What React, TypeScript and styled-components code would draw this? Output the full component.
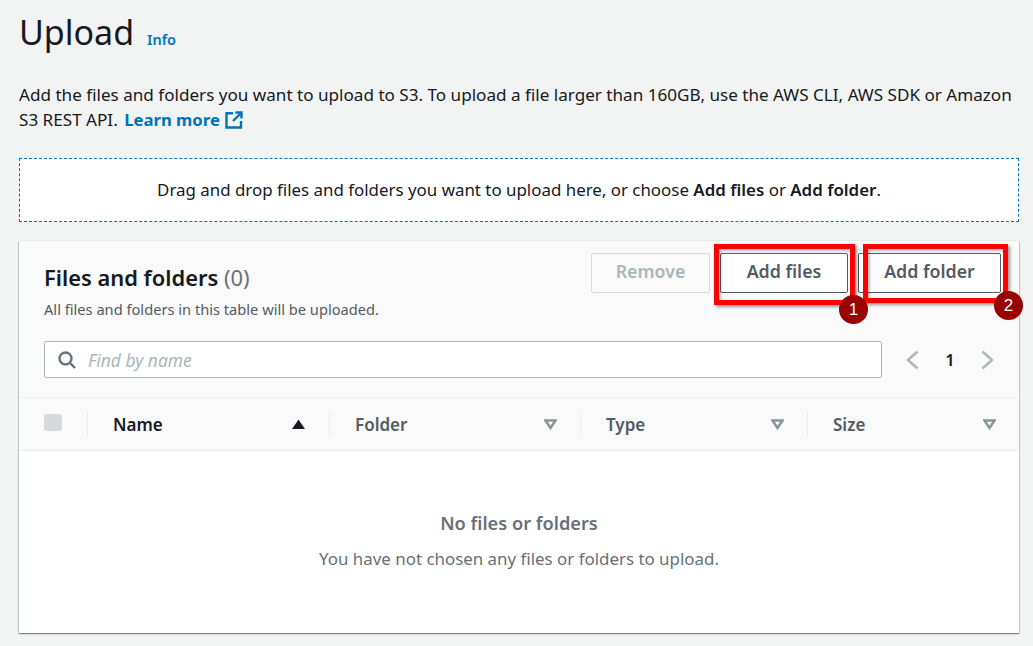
import React from "react";
import styled, { createGlobalStyle } from "styled-components";

const Global = createGlobalStyle`
  html, body { margin: 0; padding: 0; background: #f2f3f3; }
  body { font-family: "Noto Sans", "Open Sans", "Liberation Sans", sans-serif; color: #16191f; }
  #root { width: 1033px; height: 646px; overflow: hidden; }
`;

const Page = styled.main`
  width: 1000px;
  padding: 0 14px 0 19px;
  display: flex;
  flex-direction: column;
`;

const HeadingRow = styled.header`
  display: flex;
  align-items: baseline;
  gap: 13px;
  height: 70px;
  padding-top: 10px;
  box-sizing: border-box;
`;

const Title = styled.h1`
  margin: 0;
  font-size: 34px;
  line-height: 44px;
  font-weight: 400;
`;

const InfoLink = styled.a`
  color: #0073bb;
  font-size: 14.5px;
  font-weight: 600;
`;

const Description = styled.p`
  margin: 0;
  height: 88px;
  font-size: 17.1px;
  line-height: 25px;
  padding-top: 12px;
  box-sizing: border-box;
  white-space: nowrap;
`;

const LearnMore = styled.a`
  color: #0073bb;
  font-weight: 700;
  display: inline-flex;
  align-items: center;
  gap: 5px;
  vertical-align: top;
  margin-left: 2px;
  font-size: 16.7px;
`;

const DropZone = styled.div`
  height: 64px;
  box-sizing: border-box;
  background: #fff;
  border: 1px dashed #0073bb;
  padding-bottom: 2px;
  display: flex;
  align-items: center;
  justify-content: center;
  font-size: 16.9px;
  white-space: pre;
  & b { font-weight: 600; }
`;

const Card = styled.section`
  position: relative;
  margin-top: 19px;
  height: 392px;
  background: #fff;
  box-shadow: 0 1px 1px 0 rgba(0, 28, 36, 0.3), 1px 1px 1px 0 rgba(0, 28, 36, 0.15), -1px 1px 1px 0 rgba(0, 28, 36, 0.15), 0 -1px 1px 0 rgba(0, 28, 36, 0.04);
  display: flex;
  flex-direction: column;
`;

const CardHead = styled.div`
  background: #fafafa;
  height: 157px;
  box-sizing: border-box;
  padding: 12px 18px 0 25px;
  border-bottom: 1px solid #eaeded;
  display: flex;
  flex-direction: column;
`;

const TopRow = styled.div`
  display: flex;
  justify-content: space-between;
  height: 88px;
`;

const TitleBlock = styled.div`
  display: flex;
  flex-direction: column;
  padding-top: 10px;
`;

const CardTitle = styled.h2`
  margin: 0;
  font-size: 21.9px;
  line-height: 30px;
  font-weight: 600;
  & span { color: #687078; font-weight: 400; }
`;

const CardSub = styled.div`
  font-size: 14.65px;
  line-height: 20px;
  margin-top: 6px;
  color: #545b64;
`;

const Actions = styled.div`
  display: flex;
  gap: 10px;
  height: 40px;
`;

const Button = styled.button<{ $w: number; $disabled?: boolean }>`
  width: ${(p) => p.$w}px;
  height: 40px;
  box-sizing: border-box;
  background: ${(p) => (p.$disabled ? "#fafafa" : "#fff")};
  border: 1px solid ${(p) => (p.$disabled ? "#d5dbdb" : "#545b64")};
  border-radius: 2px;
  color: ${(p) => (p.$disabled ? "#aab7b8" : "#545b64")};
  font: 600 17.8px "Noto Sans", sans-serif;
  padding: 0 0 4px;
`;

const SearchRow = styled.div`
  display: flex;
  align-items: center;
  gap: 0;
`;

const Search = styled.div`
  width: 838px;
  height: 37px;
  box-sizing: border-box;
  background: #fff;
  border: 1px solid #aab7b8;
  border-radius: 2px;
  display: flex;
  align-items: center;
  padding-left: 13px;
  gap: 12px;
  font-style: italic;
  font-size: 17.4px;
  color: #aab7b8;
`;

const Pager = styled.div`
  display: flex;
  align-items: center;
  margin-left: 24px;
  width: 88px;
  justify-content: space-between;
  font-size: 16.5px;
  font-weight: 600;
`;

const HeaderRow = styled.div`
  height: 53px;
  box-sizing: border-box;
  background: #fafafa;
  border-bottom: 1px solid #eaeded;
  display: flex;
  align-items: center;
`;

const CheckCell = styled.div`
  width: 68px;
  height: 26px;
  box-sizing: border-box;
  padding-left: 25px;
  display: flex;
  align-items: center;
`;

const CheckBox = styled.div`
  width: 18px;
  height: 17px;
  background: #d5dbdb;
  border-radius: 2px;
  margin-top: -4px;
`;

const Col = styled.div<{ $w: number; $active?: boolean }>`
  width: ${(p) => p.$w}px;
  height: 26px;
  box-sizing: border-box;
  border-left: 1px solid #eaeded;
  padding: 0 ${(p) => (p.$active ? 24 : 23)}px 0 25px;
  display: flex;
  align-items: center;
  justify-content: space-between;
  font-size: 17px;
  font-weight: 600;
  color: ${(p) => (p.$active ? "#16191f" : "#545b64")};
`;

const Empty = styled.div`
  flex: 1;
  display: flex;
  flex-direction: column;
  align-items: center;
  padding-top: 60px;
  color: #687078;
  font-size: 16.9px;
  line-height: 24px;
`;

const EmptyTitle = styled.div`
  font-weight: 600;
  font-size: 18.2px;
  margin-bottom: 12px;
`;

const Mark = styled.div<{ $l: number; $t: number; $w: number; $h: number }>`
  position: absolute;
  left: ${(p) => p.$l}px;
  top: ${(p) => p.$t}px;
  width: ${(p) => p.$w}px;
  height: ${(p) => p.$h}px;
  box-sizing: border-box;
  border: 5px solid #ff0000;
  box-shadow: 2px 2px 3px rgba(0, 0, 0, 0.4), inset 2px 2px 3px rgba(0, 0, 0, 0.25);
`;

const Badge = styled.div<{ $l: number; $t: number }>`
  position: absolute;
  left: ${(p) => p.$l}px;
  top: ${(p) => p.$t}px;
  width: 29px;
  height: 29px;
  border-radius: 50%;
  background: #990000;
  color: #fff;
  font: 400 17px "Liberation Sans", sans-serif;
  display: flex;
  align-items: center;
  justify-content: center;
`;

const ExternalIcon = () => (
  <svg width="18" height="18" viewBox="0 0 18 18" fill="none" stroke="#0073bb" strokeWidth="2.4">
    <path d="M8 2.2H1.5v14.3H16V10" />
    <path d="M10.5 1.5h6v6M16.5 1.5L8 10" />
  </svg>
);

const SearchIcon = () => (
  <svg width="18" height="18" viewBox="0 0 18 18" fill="none" stroke="#687078" strokeWidth="2.4">
    <circle cx="7.5" cy="7.5" r="6" />
    <path d="M12 12l5 5" />
  </svg>
);

const Chevron = ({ left }: { left?: boolean }) => (
  <svg width="13" height="20" viewBox="0 0 13 20" fill="none" stroke="#aab7b8" strokeWidth="2.4">
    <path d={left ? "M11.5 1.5L2 10l9.5 8.5" : "M1.5 1.5L11 10l-9.5 8.5"} />
  </svg>
);

const SortUp = () => (
  <svg width="13" height="10" viewBox="0 0 13 10">
    <path d="M6.5 0.5L13 10H0z" fill="#16191f" />
  </svg>
);

const SortDown = () => (
  <svg width="13" height="11" viewBox="0 0 13 11" fill="none" stroke="#879596" strokeWidth="2.4">
    <path d="M1.5 1.5h10L6.5 9z" />
  </svg>
);

export default function App() {
  return (
    <>
      <Global />
      <Page>
        <HeadingRow>
          <Title>Upload</Title>
          <InfoLink>Info</InfoLink>
        </HeadingRow>
        <Description>
          Add the files and folders you want to upload to S3. To upload a file larger than 160GB, use the AWS CLI, AWS SDK or Amazon
          <br />
          S3 REST API.{" "}
          <LearnMore>
            Learn more <ExternalIcon />
          </LearnMore>
        </Description>
        <DropZone>
          Drag and drop files and folders you want to upload here, or choose <b>Add files</b> or <b>Add folder</b>.
        </DropZone>
        <Card>
          <CardHead>
            <TopRow>
              <TitleBlock>
                <CardTitle>
                  Files and folders <span>(0)</span>
                </CardTitle>
                <CardSub>All files and folders in this table will be uploaded.</CardSub>
              </TitleBlock>
              <Actions>
                <Button $w={119} $disabled>Remove</Button>
                <Button $w={128}>Add files</Button>
                <Button $w={143}>Add folder</Button>
              </Actions>
            </TopRow>
            <SearchRow>
              <Search>
                <SearchIcon />
                Find by name
              </Search>
              <Pager>
                <Chevron left />
                1
                <Chevron />
              </Pager>
            </SearchRow>
          </CardHead>
          <HeaderRow>
            <CheckCell><CheckBox /></CheckCell>
            <Col $w={242} $active>Name <SortUp /></Col>
            <Col $w={251}>Folder <SortDown /></Col>
            <Col $w={227}>Type <SortDown /></Col>
            <Col $w={212}>Size <SortDown /></Col>
          </HeaderRow>
          <Empty>
            <EmptyTitle>No files or folders</EmptyTitle>
            You have not chosen any files or folders to upload.
          </Empty>
          <Mark $l={695} $t={3} $w={141} $h={61} />
          <Mark $l={844} $t={3} $w={145} $h={59} />
          <Badge $l={820} $t={54}>1</Badge>
          <Badge $l={975} $t={50}>2</Badge>
        </Card>
      </Page>
    </>
  );
}
